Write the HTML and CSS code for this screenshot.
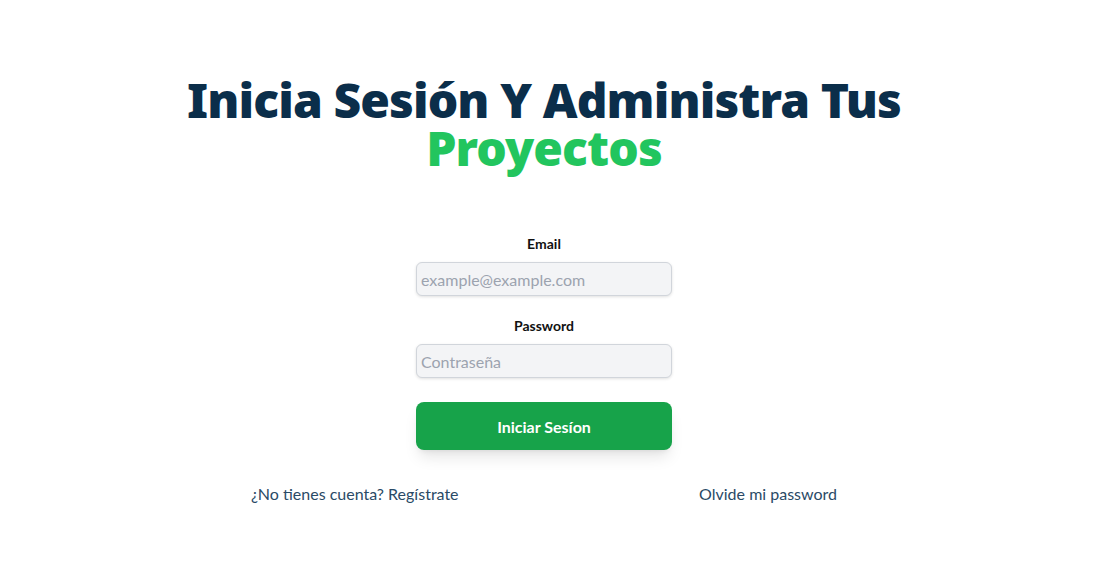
FILE: index.html
```html
<!DOCTYPE html>
<html lang="es">
<head>
<meta charset="utf-8">
<title>Iniciar Sesión</title>
<link rel="stylesheet" href="styles.css">
</head>
<body>
<main class="page">
  <h1 class="title">Inicia Sesión Y Administra Tus <span class="accent">Proyectos</span></h1>
  <form class="form">
    <div class="field">
      <label class="label" for="email">Email</label>
      <input class="input" id="email" type="email" placeholder="example@example.com">
    </div>
    <div class="field">
      <label class="label" for="password">Password</label>
      <input class="input" id="password" type="password" placeholder="Contraseña">
    </div>
    <button class="submit" type="button">Iniciar Sesíon</button>
  </form>
  <nav class="links">
    <a class="link" href="#">¿No tienes cuenta? Regístrate</a>
    <a class="link" href="#">Olvide mi password</a>
  </nav>
</main>
</body>
</html>
```
FILE: styles.css
```css
html, body {
  margin: 0;
  padding: 0;
  background: #ffffff;
}
body {
  font-family: "Lato", "Open Sans", sans-serif;
  color: #111827;
}
.page {
  width: 1088px;
  display: flex;
  flex-direction: column;
  align-items: center;
  padding-top: 76px;
}
.title {
  margin: 0;
  width: 760px;
  text-align: center;
  font-family: "Noto Sans", "Open Sans", sans-serif;
  font-size: 48px;
  line-height: 48px;
  font-weight: 900;
  letter-spacing: -0.9px;
  color: #0b2e4a;
}
.accent {
  color: #22c55e;
}
.form {
  margin-top: 62px;
  width: 256px;
  display: flex;
  flex-direction: column;
}
.field {
  display: flex;
  flex-direction: column;
  align-items: center;
  margin-bottom: 20px;
}
.label {
  font-size: 14px;
  font-weight: 700;
  line-height: 20px;
  margin-bottom: 8px;
  color: #111111;
}
.input {
  box-sizing: border-box;
  width: 256px;
  height: 34px;
  padding: 0 4px;
  border: 1px solid #d1d5db;
  border-radius: 6px;
  background: #f3f4f6;
  box-shadow: 0 1px 3px rgba(0,0,0,0.12);
  font-family: "Lato", "Open Sans", sans-serif;
  font-size: 16px;
  color: #111827;
}
.input::placeholder {
  color: #9ca3af;
}
.submit {
  margin-top: 4px;
  height: 48px;
  border: none;
  border-radius: 8px;
  background: #17a34a;
  color: #ffffff;
  font-family: "Lato", "Open Sans", sans-serif;
  font-size: 16px;
  font-weight: 700;
  box-shadow: 0 10px 15px -3px rgba(0,0,0,0.1), 0 4px 6px -4px rgba(0,0,0,0.1);
}
.links {
  margin-top: 32px;
  width: 586px;
  display: flex;
  justify-content: space-between;
}
.link {
  font-size: 16px;
  line-height: 24px;
  color: #2a4a66;
  text-decoration: none;
}
```
